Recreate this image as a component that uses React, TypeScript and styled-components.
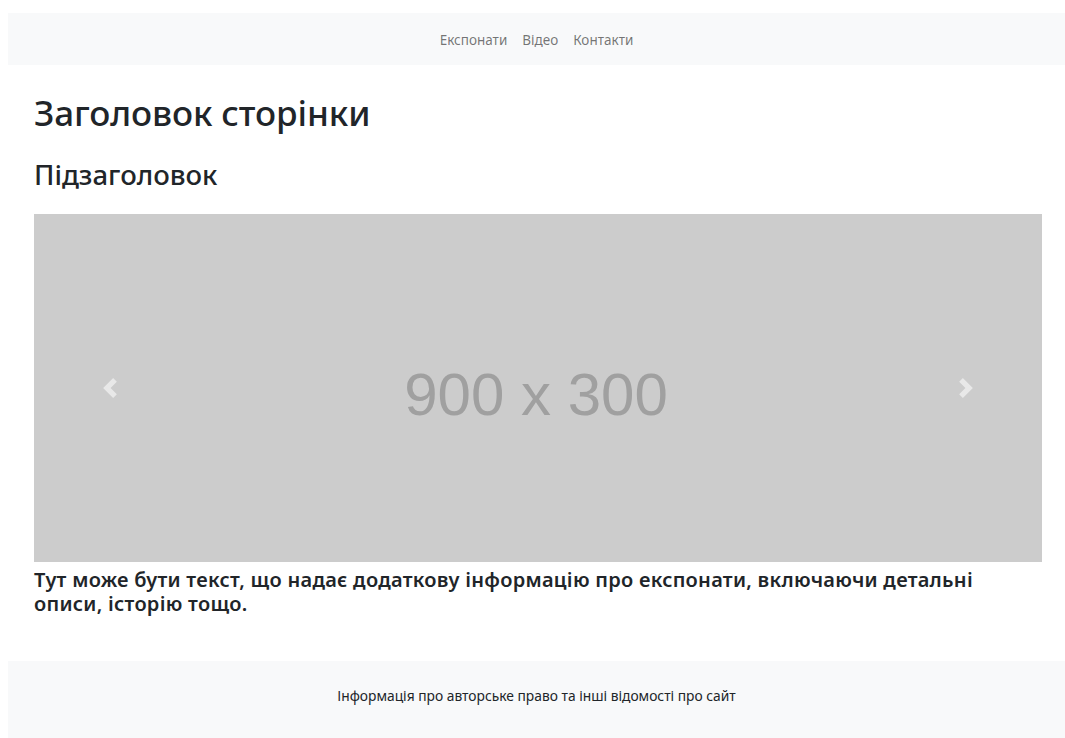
import React from "react";
import styled, { createGlobalStyle } from "styled-components";

const GlobalStyle = createGlobalStyle`
  html, body { background: #fff; }
  body {
    margin: 8px 0 0 8px;
    font-family: "Noto Sans", "Open Sans", sans-serif;
    color: #212529;
    overflow: hidden;
  }
  * { box-sizing: border-box; }
`;

const Page = styled.div`
  display: flex;
  flex-direction: column;
  min-height: 730px;
`;

const NavBar = styled.nav`
  margin-top: 5px;
  height: 52px;
  padding-top: 2px;
  background: #f8f9fa;
  display: flex;
  align-items: center;
  justify-content: center;
  gap: 15px;
`;

const NavLink = styled.a`
  font-size: 13.5px;
  color: rgba(0, 0, 0, 0.55);
  text-decoration: none;
  cursor: pointer;
`;

const Main = styled.main`
  padding: 0 23px 0 26px;
  flex: 1;
`;

const Title = styled.h1`
  margin: 27px 0 0;
  font-size: 35px;
  font-weight: 500;
  line-height: 1.2;
  letter-spacing: -0.1px;
`;

const Subtitle = styled.h3`
  margin: 24px 0 0;
  font-size: 27.5px;
  font-weight: 500;
  line-height: 1.2;
`;

const Carousel = styled.div`
  position: relative;
  margin-top: 23px;
  height: 348px;
  background: #cccccc;
  display: flex;
  align-items: center;
  justify-content: center;
`;

const Placeholder = styled.span`
  font-family: "Liberation Sans", Arial, sans-serif;
  font-size: 60px;
  color: #a0a0a0;
  transform: translate(-2px, 6px);
`;

const Control = styled.button<{ $side: "prev" | "next" }>`
  position: absolute;
  top: 0;
  bottom: 0;
  ${(p) => (p.$side === "prev" ? "left: 0;" : "right: 0;")}
  width: 15%;
  border: 0;
  background: none;
  padding: 0;
  display: flex;
  align-items: center;
  justify-content: center;
  opacity: 0.55;
  cursor: pointer;
`;

const Caption = styled.h5`
  margin: 6px 0 0;
  max-width: 990px;
  font-size: 20px;
  font-weight: 600;
  line-height: 24px;
  letter-spacing: 0.27px;
`;

const Footer = styled.footer`
  margin-top: 45px;
  height: 80px;
  background: #f8f9fa;
  display: flex;
  align-items: center;
  justify-content: center;
  padding-bottom: 12px;
  font-size: 13.8px;
  color: #212529;
`;

const Chevron = ({ dir }: { dir: "left" | "right" }) => (
  <svg width="20" height="20" viewBox="0 0 8 8" fill="#fff">
    {dir === "left" ? (
      <path d="M5.25 0l-4 4 4 4 1.5-1.5L4.25 4l2.5-2.5L5.25 0z" />
    ) : (
      <path d="M2.75 0l-1.5 1.5L3.75 4l-2.5 2.5L2.75 8l4-4-4-4z" />
    )}
  </svg>
);

export default function App() {
  return (
    <>
      <GlobalStyle />
      <Page>
        <NavBar>
          <NavLink>Експонати</NavLink>
          <NavLink>Відео</NavLink>
          <NavLink>Контакти</NavLink>
        </NavBar>
        <Main>
          <Title>Заголовок сторінки</Title>
          <Subtitle>Підзаголовок</Subtitle>
          <Carousel>
            <Placeholder>900 x 300</Placeholder>
            <Control $side="prev" aria-label="Previous">
              <Chevron dir="left" />
            </Control>
            <Control $side="next" aria-label="Next">
              <Chevron dir="right" />
            </Control>
          </Carousel>
          <Caption>
            Тут може бути текст, що надає додаткову інформацію про експонати, включаючи детальні
            описи, історію тощо.
          </Caption>
        </Main>
        <Footer>Інформація про авторське право та інші відомості про сайт</Footer>
      </Page>
    </>
  );
}
